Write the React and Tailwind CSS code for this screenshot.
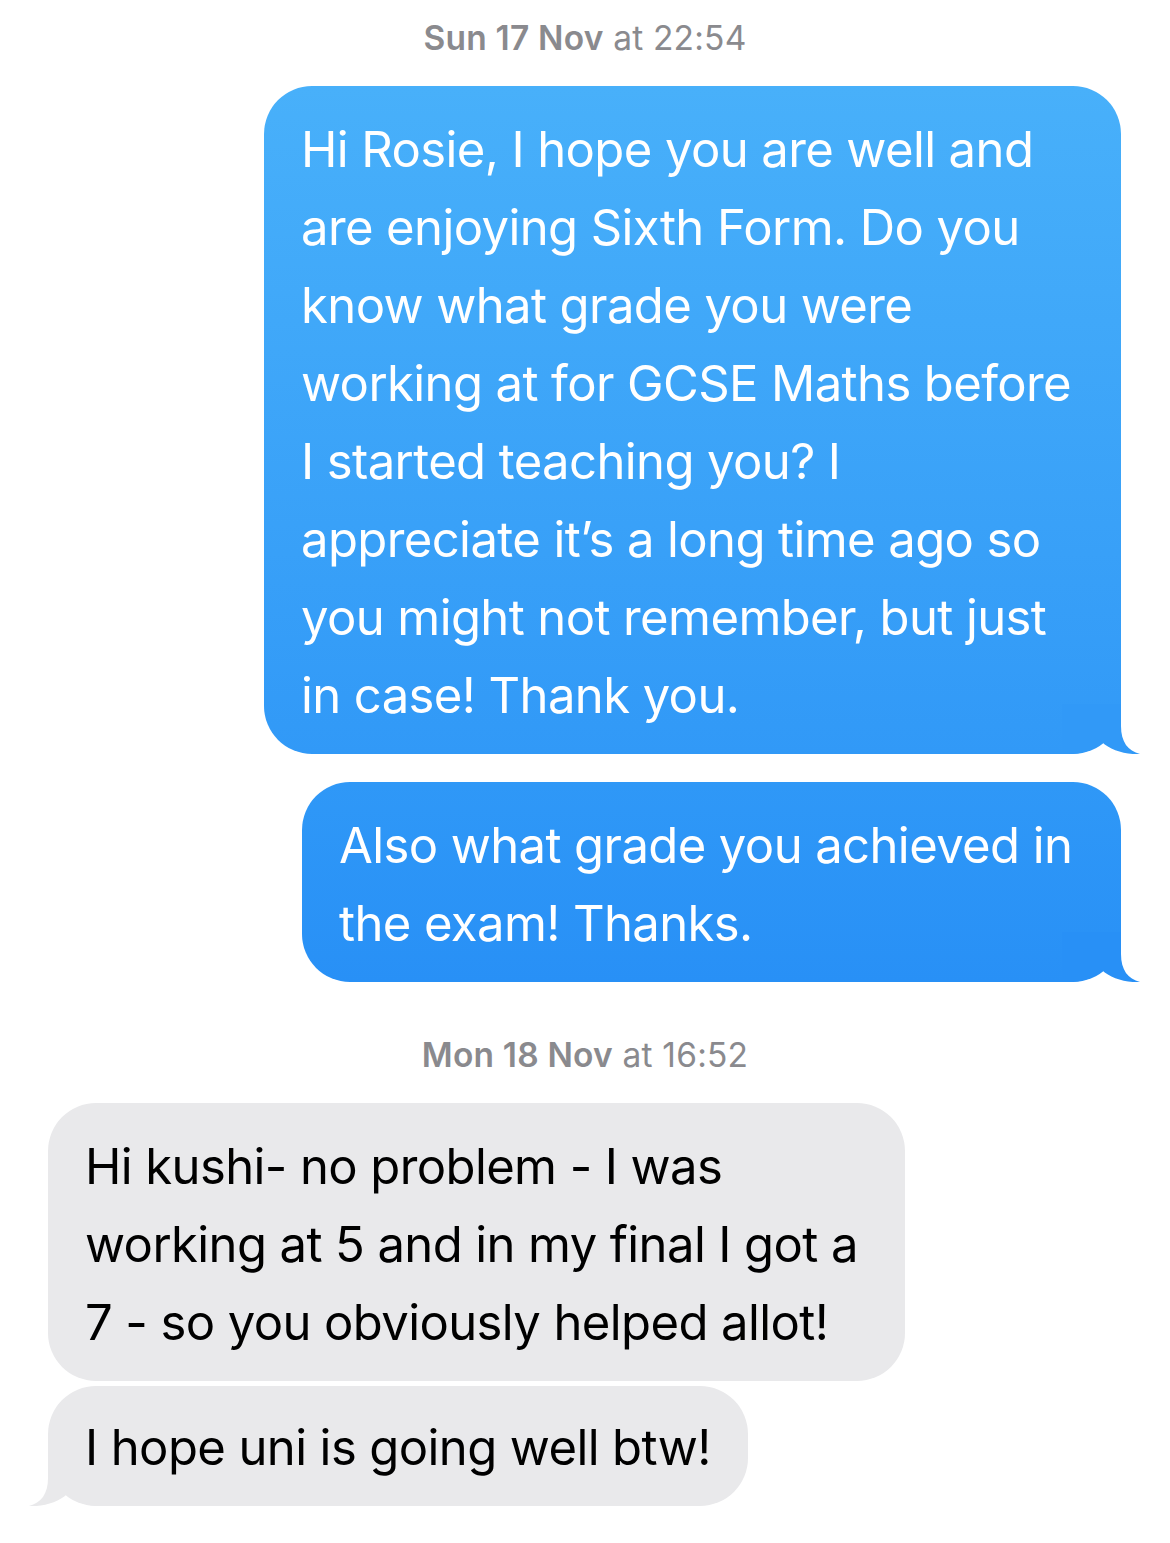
import React from "react";

function TailRight({ color }) {
  return (
    <svg
      className="absolute right-[-19px] bottom-0"
      width="78"
      height="50"
      viewBox="0 0 78 50"
    >
      <path
        d="M59 0 L59 22 C59 38 66 47 78 50 C64 51 48 46 40 38 C32 46 20 50 6 50 L0 50 L0 0 Z"
        fill={color}
      />
    </svg>
  );
}

function TailLeft({ color }) {
  return (
    <svg
      className="absolute left-[-19px] bottom-0 -scale-x-100"
      width="78"
      height="50"
      viewBox="0 0 78 50"
    >
      <path
        d="M59 0 L59 22 C59 38 66 47 78 50 C64 51 48 46 40 38 C32 46 20 50 6 50 L0 50 L0 0 Z"
        fill={color}
      />
    </svg>
  );
}

function Lines({ lines }) {
  return lines.map((l, i) => (
    <div key={i} className="whitespace-nowrap">
      {l}
    </div>
  ));
}

export default function App() {
  return (
    <div
      className="w-[1170px] h-[1543px] bg-white flex flex-col overflow-hidden"
      style={{ fontFamily: "Inter, 'Noto Sans', sans-serif" }}
    >
      <div className="mt-[20px] h-[36px] leading-[36px] text-center text-[33.5px] text-[#8a8a8e] tracking-[0.2px]">
        <span className="font-semibold">Sun 17 Nov</span>
        <span> at 22:54</span>
      </div>

      <div className="mt-[30px] self-end mr-[49px] relative w-[857px] rounded-[48px] bg-linear-to-b from-[#48b0fa] to-[#3199f7] pl-[37px] pt-[25px] pb-[19px] text-white text-[49px] leading-[78px] tracking-[-0.6px]">
        <TailRight color="#3199f7" />
        <div className="relative">
          <Lines
            lines={[
              "Hi Rosie, I hope you are well and",
              "are enjoying Sixth Form. Do you",
              "know what grade you were",
              "working at for GCSE Maths before",
              "I started teaching you? I",
              "appreciate it\u2019s a long time ago so",
              "you might not remember, but just",
              "in case! Thank you.",
            ]}
          />
        </div>
      </div>

      <div className="mt-[28px] self-end mr-[49px] relative w-[819px] rounded-[48px] bg-linear-to-b from-[#2f98f7] to-[#2890f6] pl-[37px] pt-[25px] pb-[19px] text-white text-[49px] leading-[78px] tracking-[-0.6px]">
        <TailRight color="#2890f6" />
        <div className="relative">
          <Lines lines={["Also what grade you achieved in", "the exam! Thanks."]} />
        </div>
      </div>

      <div className="mt-[55px] h-[36px] leading-[36px] text-center text-[33.5px] text-[#8a8a8e] tracking-[0.2px]">
        <span className="font-semibold">Mon 18 Nov</span>
        <span> at 16:52</span>
      </div>

      <div className="mt-[30px] ml-[48px] relative w-[857px] rounded-[48px] bg-[#e9e9eb] pl-[37px] pt-[25px] pb-[19px] text-black text-[49px] leading-[78px] tracking-[-0.6px]">
        <Lines
          lines={[
            "Hi kushi- no problem - I was",
            "working at 5 and in my final I got a",
            "7 - so you obviously helped allot!",
          ]}
        />
      </div>

      <div className="mt-[5px] ml-[48px] relative w-[700px] rounded-[48px] bg-[#e9e9eb] pl-[37px] pt-[23px] pb-[19px] text-black text-[49px] leading-[78px] tracking-[-0.6px]">
        <TailLeft color="#e9e9eb" />
        <div className="relative">
          <Lines lines={["I hope uni is going well btw!"]} />
        </div>
      </div>
    </div>
  );
}
